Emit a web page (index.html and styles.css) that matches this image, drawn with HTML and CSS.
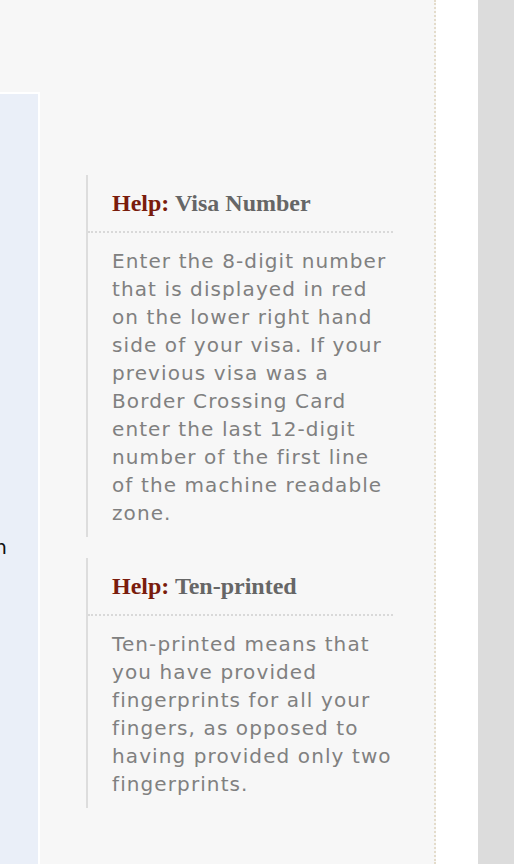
FILE: index.html
```html
<!DOCTYPE html>
<html>
<head>
<meta charset="utf-8">
<link rel="stylesheet" href="styles.css">
</head>
<body>
<div class="page">
  <div class="main">
    <div class="panel">
      <div class="label-row"><span class="label">Ten-printed fingerprints taken</span></div>
    </div>
    <div class="help-col">
      <div class="help">
        <h3 class="help-title"><span class="help-key">Help:</span> Visa Number</h3>
        <p class="help-body">Enter the 8-digit number that is displayed in red on the lower right hand side of your visa. If your previous visa was a Border Crossing Card enter the last 12-digit number of the first line of the machine readable zone.</p>
      </div>
      <div class="help">
        <h3 class="help-title"><span class="help-key">Help:</span> Ten-printed</h3>
        <p class="help-body">Ten-printed means that you have provided fingerprints for all your fingers, as opposed to having provided only two fingerprints.</p>
      </div>
    </div>
  </div>
  <div class="gutter"></div>
  <div class="scroll"></div>
</div>
</body>
</html>
```

FILE: styles.css
```css
html, body {
  margin: 0;
  padding: 0;
  height: 100%;
  overflow: hidden;
}
body {
  font-family: "DejaVu Sans", Verdana, sans-serif;
  background: #ffffff;
}
.page {
  display: flex;
  height: 864px;
}
.main {
  width: 434px;
  flex: none;
  background: #f7f7f7;
  border-right: 2px dotted #e4dccb;
  display: flex;
  align-items: flex-start;
}
.gutter {
  width: 42px;
  flex: none;
  background: #ffffff;
}
.scroll {
  width: 36px;
  flex: none;
  background: #dcdcdc;
}
.panel {
  width: 38px;
  height: 772px;
  margin-top: 92px;
  flex: none;
  background: #eaeff8;
  border-top: 2px solid #ffffff;
  border-right: 2px solid #ffffff;
  box-sizing: content-box;
  overflow: hidden;
}
.label-row {
  width: 7px;
  margin-top: 439px;
  display: flex;
  justify-content: flex-end;
  white-space: nowrap;
  font-size: 20px;
  line-height: 28px;
  color: #111;
}
.label {
  flex: none;
}
.help-col {
  margin-left: 46px;
  margin-top: 175px;
  width: 307px;
  display: flex;
  flex-direction: column;
  gap: 21px;
}
.help {
  border-left: 2px solid #dddddd;
}
.help-title {
  margin: 0;
  padding: 14px 0 14px 24px;
  font-family: "Liberation Serif", "Times New Roman", serif;
  font-weight: bold;
  font-size: 24px;
  line-height: 28px;
  color: #666666;
  border-bottom: 2px dotted #d9d9d9;
}
.help-key {
  color: #7a1c0c;
}
.help-body {
  margin: 0;
  padding: 14px 0 10px 24px;
  font-size: 20px;
  line-height: 28px;
  letter-spacing: 1.1px;
  color: #808080;
}
```
